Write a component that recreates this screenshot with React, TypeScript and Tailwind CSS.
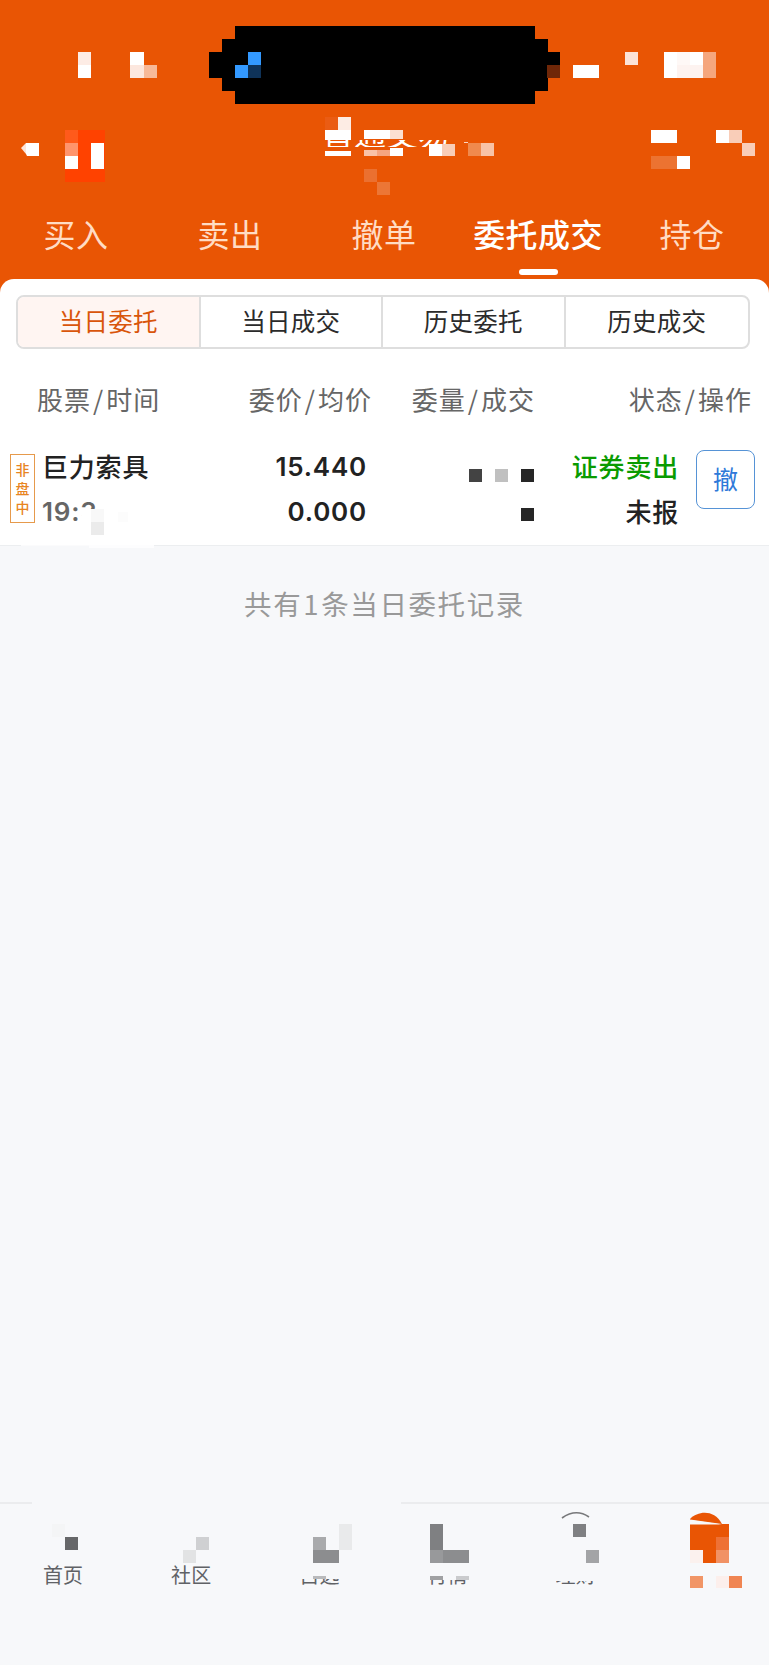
import clsx from "clsx";

type Block = [x: number, y: number, w: number, h: number, fill: string];

// Groupe de pavés de couleur
const Blocks = ({ w, h, items, className }: { w: number; h: number; items: Block[]; className?: string }) => (
	<svg width={w} height={h} viewBox={`0 0 ${w} ${h}`} className={clsx("shrink-0 overflow-visible", className)}>
		{items.map(([x, y, bw, bh, fill], i) => (
			<rect key={i} x={x} y={y} width={bw} height={bh} fill={fill} />
		))}
	</svg>
);

const tabs = ["买入", "卖出", "撤单", "委托成交", "持仓"];
const segments = ["当日委托", "当日成交", "历史委托", "历史成交"];

const StatusBar = () => (
	<div className="flex h-[117px] items-start">
		<Blocks className="ml-[78px] mt-[52px]" w={13} h={26} items={[[0, 0, 13, 13, "#fdece5"], [0, 13, 13, 13, "#fff"]]} />
		<Blocks
			className="ml-[39px] mt-[52px]"
			w={27}
			h={26}
			items={[[0, 0, 14, 13, "#fff"], [0, 13, 14, 13, "#fce7de"], [14, 13, 13, 13, "#f7b998"]]}
		/>
		<Blocks
			className="ml-[52px] mt-[26px]"
			w={351}
			h={78}
			items={[
				[26, 0, 300, 78, "#000"],
				[13, 13, 326, 52, "#000"],
				[0, 26, 351, 26, "#000"],
				[338, 39, 13, 13, "#6f2708"],
				[39, 26, 13, 13, "#3399ff"],
				[26, 39, 13, 13, "#3399ff"],
				[39, 39, 13, 13, "#0f3359"],
			]}
		/>
		<Blocks className="ml-[13px] mt-[65px]" w={26} h={13} items={[[0, 0, 26, 13, "#fff"]]} />
		<Blocks className="ml-[26px] mt-[52px]" w={13} h={13} items={[[0, 0, 13, 13, "#fce3d7"]]} />
		<Blocks
			className="ml-[26px] mt-[52px]"
			w={52}
			h={26}
			items={[[0, 0, 39, 26, "#fff"], [13, 0, 13, 13, "#fef8f6"], [13, 13, 26, 13, "#fdf3f0"], [39, 0, 13, 26, "#f5a67d"]]}
		/>
	</div>
);

const TitleBar = () => (
	<div className="flex h-[78px] items-start">
		<svg width="19" height="13" className="ml-[21px] mt-[26px] shrink-0" fill="#fff">
			<path d="M0 5 5 0V11Z" fill="#fde6da" />
			<path d="M5 0H18V13H6L5 11Z" />
		</svg>
		<Blocks
			className="ml-[25px] mt-[13px]"
			w={40}
			h={52}
			items={[
				[0, 0, 40, 52, "#ff4200"],
				[0, 0, 13, 13, "#ff5a1b"],
				[0, 13, 13, 13, "#ff946c"],
				[0, 26, 13, 13, "#fff"],
				[26, 13, 13, 26, "#fff"],
			]}
		/>
		<div className="relative ml-[217px] h-[78px] w-[176px]">
			<div className="mt-[23px] h-[7px] overflow-hidden">
				<h1 className="-mt-[30px] whitespace-nowrap text-[32px] leading-[44px] text-white">普通交易</h1>
			</div>
			<Blocks
				className="absolute left-[3px] top-0"
				w={170}
				h={78}
				items={[
					[0, 0, 13, 13, "#ea5c14"],
					[13, 0, 13, 13, "#fdece4"],
					[0, 13, 26, 10, "#fff"],
					[0, 34, 26, 5, "#fff"],
					[39, 13, 26, 9, "#fff"],
					[65, 13, 13, 9, "#fcdfd1"],
					[39, 33, 13, 6, "#f9c2a8"],
					[52, 33, 13, 6, "#f5a581"],
					[65, 31, 13, 8, "#fff"],
					[104, 27, 13, 12, "#fff"],
					[117, 27, 13, 12, "#f9cdb7"],
					[143, 26, 13, 13, "#f08a4e"],
					[156, 26, 13, 13, "#f8c3a7"],
					[139, 25, 4, 1, "#fbd6c2"],
					[39, 52, 13, 13, "#eb7030"],
					[52, 65, 13, 13, "#ec7636"],
				]}
			/>
		</div>
		<Blocks
			className="ml-[153px] mt-[13px]"
			w={40}
			h={39}
			items={[[0, 0, 26, 13, "#fff"], [0, 26, 26, 13, "#ec7331"], [26, 26, 13, 13, "#fff"]]}
		/>
		<Blocks
			className="ml-[25px] mt-[13px]"
			w={40}
			h={26}
			items={[[0, 0, 13, 13, "#fff"], [13, 0, 13, 13, "#f9cdb8"], [26, 13, 13, 13, "#f9cdb8"]]}
		/>
	</div>
);

const Tabs = () => (
	<nav className="-ml-px grid h-[84px] grid-cols-5 text-[32px] leading-[48px] tracking-[0.4px] text-[#ffdcc4]">
		{tabs.map((tab) => {
			const active = tab === "委托成交";
			return (
				<button key={tab} className={clsx("flex flex-col items-center whitespace-nowrap pt-[14px]", active && "font-medium text-white")}>
					{tab}
					{active && <span className="mt-[12px] h-[6px] w-[39px] rounded-full bg-white" />}
				</button>
			);
		})}
	</nav>
);

const Segments = () => (
	<div className="mx-4 mt-4 grid h-[54px] w-[734px] grid-cols-4 overflow-hidden rounded-lg border-2 border-[#dedede] text-[24.5px] tracking-[0.3px] text-[#2b2b2b]">
		{segments.map((name, i) => (
			<button
				key={name}
				className={clsx(
					"flex items-center justify-center pb-[2px]",
					i === 0 && "bg-[#fff5f2] text-[#d9550b]",
					i < 3 && "border-r-2 border-[#dedede]"
				)}
			>
				{name}
			</button>
		))}
	</div>
);

const OrderRow = () => (
	<div className="relative flex h-[123px] border-b border-[#eceef0] pl-[10px] pt-[31px] text-[26px] font-medium leading-[45px] tracking-[0.8px] text-[#222]">
		<div className="flex h-[69px] w-[25px] flex-col items-center justify-center border border-[#e69a4c] text-[14px] font-medium leading-[19px] tracking-normal text-[#e8851f]">
			<span>非</span>
			<span>盘</span>
			<span>中</span>
		</div>
		<div className="-mt-[11px] ml-[7px] w-[160px]">
			<div>巨力索具</div>
			<div className="mt-px font-['Inter'] font-semibold text-[#666]">19:3</div>
		</div>
		<svg width="60" height="40" className="absolute left-[80px] top-[82px]">
			<path d="M0 12 6 4H60V40H0Z" fill="#fff" />
			<rect x="11" y="4" width="13" height="13" fill="#f8f8f8" />
			<rect x="11" y="17" width="13" height="13" fill="#ebebeb" />
			<rect x="38" y="7" width="10" height="10" fill="#fcfcfc" />
		</svg>
		<div className="-mt-[10px] w-[165px] text-right font-['Inter'] font-semibold">
			<div>15.440</div>
			<div>0.000</div>
		</div>
		<Blocks
			className="ml-[102px] mt-[15px]"
			w={65}
			h={52}
			items={[[0, 0, 13, 13, "#434343"], [26, 0, 13, 13, "#c0c0c0"], [52, 0, 13, 13, "#262626"], [52, 39, 13, 13, "#262626"]]}
		/>
		<div className="-mt-[11px] w-[145px] text-right">
			<div className="text-[#0a9b00]">证券卖出</div>
			<div>未报</div>
		</div>
		<button className="-mt-[4px] ml-[17px] h-[59px] w-[59px] rounded-[8px] border-[1.5px] border-[#5693d6] pb-[3px] text-[25px] font-normal leading-[50px] tracking-normal text-[#2f7ad9]">
			撤
		</button>
		{/* Le fond blanc déborde sur le filet du bas */}
		<div className="absolute -bottom-px left-[21px] h-px w-[133px] bg-[#fbfbfc]" />
		<div className="absolute -bottom-[3px] left-[89px] h-[3px] w-[65px] bg-[#fdfdfe]" />
	</div>
);

const navItems: { label: string; clip?: string; icon: Block[]; smudge?: Block[] }[] = [
	{ label: "首页", icon: [[20, 14, 13, 13, "#f4f5f6"], [33, 27, 13, 13, "#666769"]] },
	{ label: "社区", icon: [[36, 27, 13, 13, "#cfd0d2"], [23, 40, 13, 13, "#e2e3e4"]] },
	{
		label: "自选",
		clip: "h-[7px] mt-[16px]",
		icon: [[25, 27, 13, 13, "#a9aaac"], [25, 40, 26, 13, "#8c8d8f"], [51, 14, 13, 26, "#e9eaeb"]],
		smudge: [[25, 13, 13, 3, "#b9babc"]],
	},
	{
		label: "行情",
		clip: "h-[6px] mt-[17px]",
		icon: [[13, 14, 13, 26, "#7f8082"], [13, 40, 13, 13, "#98999b"], [26, 40, 26, 13, "#8c8d8f"]],
		smudge: [[13, 13, 13, 4, "#a0a1a3"], [39, 13, 13, 4, "#cacbcd"]],
	},
	{ label: "理财", clip: "h-[5px] mt-[18px]", icon: [[28, 14, 13, 13, "#7f8082"], [41, 40, 13, 13, "#a3a4a6"]] },
	{
		label: "",
		icon: [[17, 14, 39, 26, "#e95504"], [43, 27, 13, 13, "#ee7135"], [17, 40, 13, 13, "#fbf1ee"], [30, 40, 13, 13, "#e95504"], [43, 40, 13, 13, "#f19265"]],
		smudge: [[17, 13, 13, 12, "#f19566"], [43, 13, 13, 12, "#fcefec"], [56, 13, 13, 12, "#f08552"]],
	},
];

const BottomNav = () => (
	<footer className="h-[163px]">
		<div className="flex justify-between">
			<div className="h-[2px] w-[32px] bg-[#ebecee]" />
			<div className="h-[2px] w-[368px] bg-[#ebecee]" />
		</div>
		<div className="grid grid-cols-6 pt-[6px]">
			{navItems.map((item, i) => (
				<div key={i} className="relative flex flex-col items-center">
					<svg width="64" height="53" className="overflow-visible">
						{item.icon.map(([x, y, w, h, fill], j) => (
							<rect key={j} x={x} y={y} width={w} height={h} fill={fill} />
						))}
						{i === 4 && <path d="M17 8Q31 -2 44 7" fill="none" stroke="#77787a" strokeWidth="1.6" />}
						{i === 5 && <path d="M17 9C25 1 41 -1 49 14L17 9.500Z" fill="#e95504" />}
						{i === 5 && <path d="M17 10 49 14.500H17Z" fill="#f7f8fa" />}
					</svg>
					<div className={clsx("mr-[2px] text-[20px] tracking-[0.2px] text-[#606266]", item.clip ? "overflow-hidden" : "h-[30px]", item.clip)}>
						<div className={clsx("flex leading-[22px]", item.clip ? "h-full items-end" : "mt-px h-[22px]")}>{item.label}</div>
					</div>
					{item.smudge && <Blocks className="absolute top-[53px]" w={64} h={30} items={item.smudge} />}
				</div>
			))}
		</div>
	</footer>
);

const Slash = () => <span className="mx-[2px]">/</span>;

const App = () => {
	return (
		<div className="flex h-[1665px] w-[769px] flex-col overflow-hidden bg-[#f7f8fa] font-['Noto_Sans_CJK_SC',sans-serif]">
			<header className="bg-[#e95504]">
				<StatusBar />
				<TitleBar />
				<Tabs />
			</header>

			<div className="bg-[#e95504]">
				<div className="flow-root rounded-t-[14px] bg-white">
					<Segments />
					<div className="flex h-[74px] items-center pt-[24px] text-[26px] tracking-[1px] text-[#666]">
						<div className="w-[160px] pl-[37px] whitespace-nowrap">股票<Slash />时间</div>
						<div className="w-[212px] text-right">委价<Slash />均价</div>
						<div className="w-[163px] text-right">委量<Slash />成交</div>
						<div className="w-[217px] text-right">状态<Slash />操作</div>
					</div>
				</div>
			</div>
			<div className="bg-white">
				<OrderRow />
			</div>

			<p className="mt-[36px] text-center text-[27.5px] leading-[42px] tracking-[1.6px] text-[#999]">
				共有<span className="mx-px">1</span>条当日委托记录
			</p>

			<div className="flex-1" />
			<BottomNav />
		</div>
	);
};

export default App;
